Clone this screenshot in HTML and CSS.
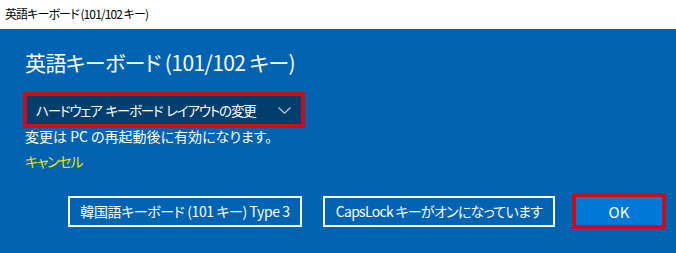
FILE: index.html
```html
<!DOCTYPE html>
<html lang="ja">
<head>
<meta charset="utf-8">
<link rel="stylesheet" href="styles.css">
</head>
<body>
<div class="window">
  <div class="titlebar">英語キーボード (101/102 キー)</div>
  <div class="content">
    <h1 class="heading">英語キーボード (101/102 キー)</h1>
    <div class="highlight">
      <div class="dropdown">
        <span class="dropdown-label">ハードウェア キーボード レイアウトの変更</span>
        <svg class="chevron" width="13" height="7" viewBox="0 0 13 7"><path d="M0.5 0.5 L6.5 6.3 L12.5 0.5" fill="none" stroke="#b8c8d8" stroke-width="1.2"/></svg>
      </div>
    </div>
    <p class="note">変更は PC の再起動後に有効になります。</p>
    <a class="cancel">キャンセル</a>
    <div class="buttons">
      <button class="btn btn-outline btn-korean">韓国語キーボード (101 キー) Type 3</button>
      <button class="btn btn-outline btn-caps">CapsLock キーがオンになっています</button>
      <div class="ok-highlight"><button class="btn btn-ok">OK</button></div>
    </div>
  </div>
</div>
</body>
</html>
```

FILE: styles.css
```css
html, body {
  margin: 0;
  padding: 0;
}
body {
  width: 676px;
  height: 253px;
  overflow: hidden;
  font-family: "Noto Sans CJK JP", "Noto Sans", sans-serif;
  font-feature-settings: "palt";
}
.window {
  display: flex;
  flex-direction: column;
  height: 253px;
}
.titlebar {
  height: 29px;
  background: #ffffff;
  color: #000000;
  font-size: 12px;
  line-height: 28px;
  padding-left: 5px;
  box-sizing: border-box;
  letter-spacing: -0.9px;
}
.content {
  flex: 1;
  background: #0063b1;
  color: #ffffff;
  display: flex;
  flex-direction: column;
  align-items: flex-start;
  padding: 18px 10px 0 25px;
}
.heading {
  margin: 0;
  font-size: 21px;
  font-weight: 400;
  line-height: 30px;
  letter-spacing: -0.6px;
}
.highlight {
  margin-top: 15px;
  margin-left: -2px;
  border: 4px solid #c50f1f;
  box-sizing: border-box;
  width: 282px;
  height: 36px;
}
.dropdown {
  background: #003e6e;
  height: 100%;
  display: flex;
  align-items: center;
  justify-content: space-between;
  padding: 0 10px 0 9px;
  font-size: 13.5px;
  letter-spacing: -1.2px;
  word-spacing: 2px;
  white-space: nowrap;
}
.chevron {
  display: block;
}
.note {
  margin: -2px 0 0 0;
  font-size: 14px;
  line-height: 20px;
  white-space: nowrap;
}
.cancel {
  color: #e6e600;
  font-size: 14px;
  line-height: 20px;
  margin-top: 5px;
  letter-spacing: -1.2px;
}
.buttons {
  align-self: stretch;
  display: flex;
  justify-content: flex-end;
  align-items: center;
  margin-top: 22px;
}
.btn {
  font-family: inherit;
  font-feature-settings: "palt";
  font-size: 14px;
  letter-spacing: -0.4px;
  color: #ffffff;
  margin: 0;
  padding: 0;
  box-sizing: border-box;
  cursor: default;
  white-space: nowrap;
}
.btn-outline {
  background: transparent;
  border: 2px solid #ffffff;
  height: 31px;
}
.btn-korean {
  width: 234px;
}
.btn-caps {
  width: 232px;
  margin-left: 21px;
  letter-spacing: -0.7px;
}
.ok-highlight {
  margin-left: 17px;
  border: 4px solid #c50f1f;
  width: 94px;
  height: 36px;
  box-sizing: border-box;
}
.btn-ok {
  display: block;
  width: 100%;
  height: 100%;
  border: none;
  background: #0078d7;
  font-size: 15px;
  letter-spacing: 0;
}
```
